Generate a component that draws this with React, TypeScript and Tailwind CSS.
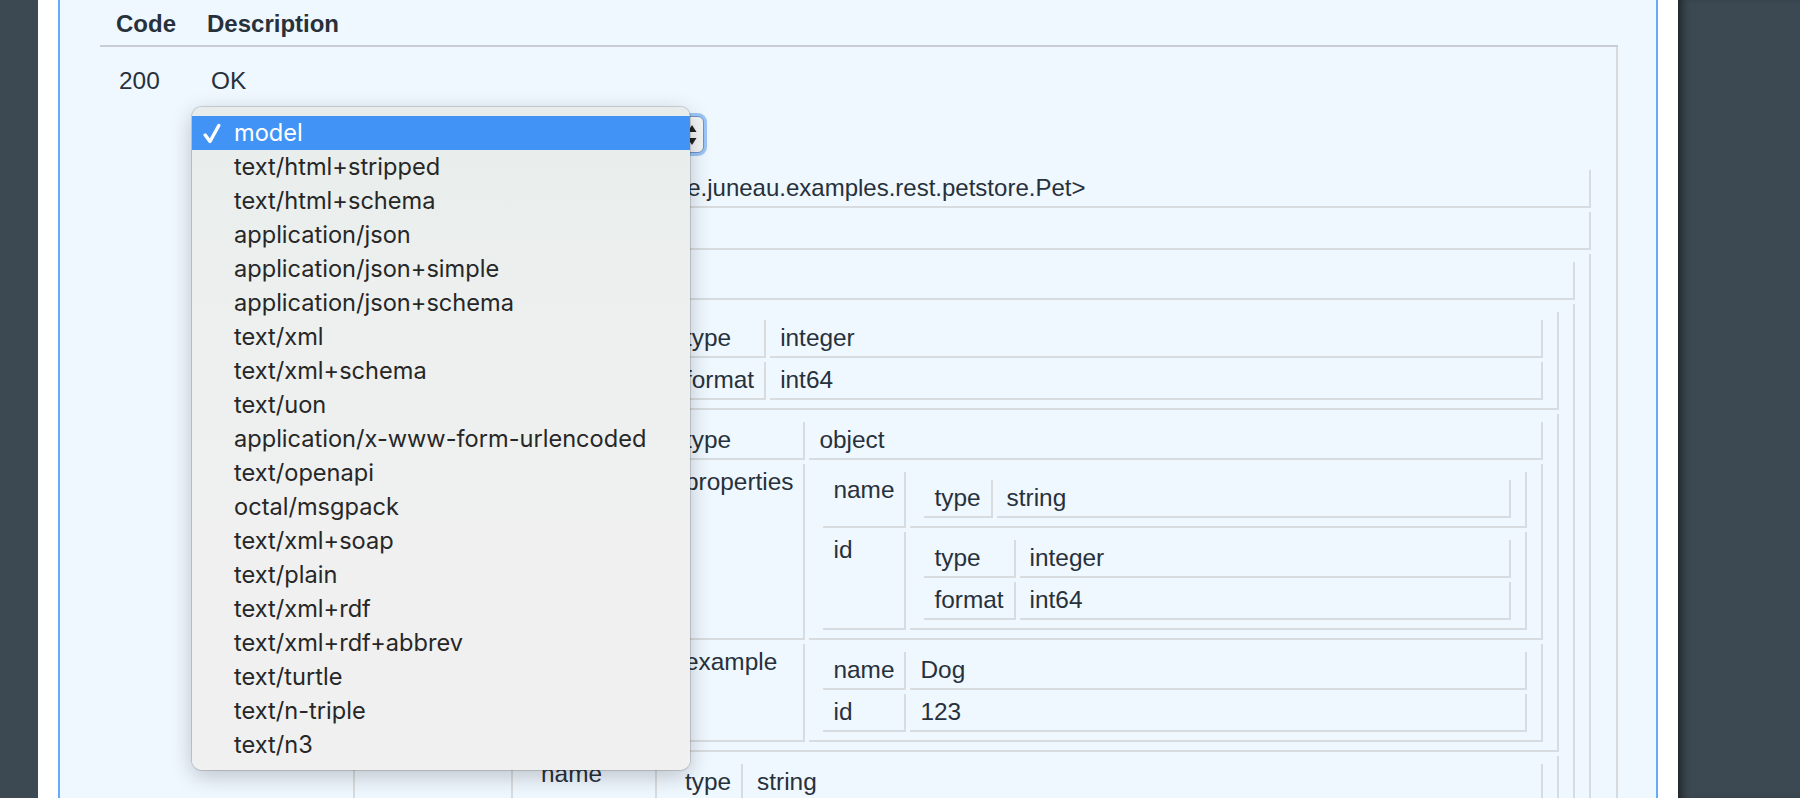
import React from "react";

type Row = { k: string; v: string | Table; pad?: boolean };
type Table = { rows: Row[]; cols?: string };

const cell = "border-r-2 border-b-2 border-[#d9dcdf] px-2.5 py-1";

function KV({ t }: { t: Table }) {
  return (
    <div className={`grid gap-1 p-1 ${t.cols ?? "grid-cols-[auto_minmax(0,1fr)]"}`}>
      {t.rows.map((r, i) => (
        <React.Fragment key={i}>
          <div className={`${cell} whitespace-nowrap`}>{r.k}</div>
          {typeof r.v === "string" ? (
            <div className={`${cell} whitespace-nowrap overflow-hidden`}>
              {r.pad ? <span className="pl-[4px] text-[24px]">{r.v}</span> : r.v}
            </div>
          ) : (
            <div className={`${cell} min-w-0`}>
              <KV t={r.v} />
            </div>
          )}
        </React.Fragment>
      ))}
    </div>
  );
}

const s = (k: string, v: string): Row => ({ k, v });
const n = (k: string, rows: Row[], cols?: string): Row => ({ k, v: { rows, cols } });

const petProps: Table = {
  cols: "grid-cols-[126px_minmax(0,1fr)]",
  rows: [
    n("id", [s("type", "integer"), s("format", "int64")]),
    n("category", [
      s("type", "object"),
      n("properties", [
        n("name", [s("type", "string")]),
        n("id", [s("type", "integer"), s("format", "int64")]),
      ]),
      n("example", [s("name", "Dog"), s("id", "123")]),
    ]),
    n("name", [s("type", "string")]),
    n("photoUrls", [s("type", "array")]),
    n("tags", [s("type", "array")]),
    n("status", [s("type", "string")]),
  ],
};

const schema: Table = {
  cols: "grid-cols-[140px_minmax(0,1fr)]",
  rows: [
    { k: "description", v: "java.util.Collection<org.apache.juneau.examples.rest.petstore.Pet>", pad: true },
    s("type", "array"),
    {
      k: "items",
      v: {
        cols: "grid-cols-[140px_minmax(0,1fr)]",
        rows: [s("type", "object"), { k: "properties", v: petProps }],
      },
    },
  ],
};

const options = [
  "model",
  "text/html+stripped",
  "text/html+schema",
  "application/json",
  "application/json+simple",
  "application/json+schema",
  "text/xml",
  "text/xml+schema",
  "text/uon",
  "application/x-www-form-urlencoded",
  "text/openapi",
  "octal/msgpack",
  "text/xml+soap",
  "text/plain",
  "text/xml+rdf",
  "text/xml+rdf+abbrev",
  "text/turtle",
  "text/n-triple",
  "text/n3",
];

export default function App() {
  return (
    <div className="relative flex w-[1800px] h-[798px] overflow-hidden bg-[#3c4952] font-['Liberation_Sans',Arial,sans-serif] text-[24.4px] leading-[28px] text-[#27313b]">
      <div className="w-[38px] shrink-0" />
      <div className="w-[1640px] shrink-0 bg-white px-[20px]">
        <div className="h-full border-x-2 border-[#64acfa] bg-[#eff7ff] pl-[40px]">
          <div className="w-[1518px]">
            <div className="grid grid-cols-[96px_minmax(0,1fr)] border-b-2 border-[#c9ced5] font-bold text-[24px]">
              <div className="pl-[16px] pt-[10px] pb-[7px]">Code</div>
              <div className="pl-[11px] pt-[10px] pb-[7px]">Description</div>
            </div>
            <div className="grid grid-cols-[96px_minmax(0,1fr)]">
              <div className="pl-[19px] pt-[20px]">200</div>
              <div className="border-r-2 border-[#d7dadd] pl-[15px] pr-[21px] pt-[20px] h-[760px]">
                <div>OK</div>
                <div className="mt-[21px] relative h-[37px] w-[493px] rounded-[6px] border border-[#6f94c4] bg-[#f3f5f7] shadow-[0_0_0_3px_rgba(110,170,245,0.65)]">
                  <span className="absolute left-[22px] top-[3px]">model</span>
                  <svg className="absolute right-[6px] top-[6px]" width="10" height="24" viewBox="0 0 10 24">
                    <path d="M5 2 L9.5 9 L0.5 9 Z" fill="#222" />
                    <path d="M5 22 L9.5 15 L0.5 15 Z" fill="#222" />
                  </svg>
                </div>
                <div className="mt-[13px]">
                  <KV t={schema} />
                </div>
              </div>
            </div>
          </div>
        </div>
      </div>
      <div className="flex-1 shadow-[inset_9px_0_8px_-5px_rgba(0,0,0,0.5)]" />

      {/* popup menu */}
      <div className="absolute left-[192px] top-[107px] w-[498px] h-[663px] rounded-[10px] pt-[9px] bg-[linear-gradient(180deg,#e8edec_0%,#edf0ef_35%,#f0f0f0_70%)] shadow-[0_6px_22px_rgba(0,0,0,0.22),0_0_0_1px_rgba(0,0,0,0.14)] font-['Inter',sans-serif] text-[23.6px] leading-[34px] text-[#272727]">
        {options.map((o, i) => (
          <div
            key={o}
            className={`relative h-[34px] pl-[42px] whitespace-nowrap ${i === 0 ? "bg-[#4193f6] text-white" : ""}`}
          >
            {i === 0 && (
              <svg className="absolute left-[11px] top-[7px]" width="18" height="21" viewBox="0 0 18 21">
                <path d="M2.2 12 L7 18.5 L15.8 2.5" fill="none" stroke="#fff" strokeWidth="3.4" strokeLinecap="round" strokeLinejoin="round" />
              </svg>
            )}
            {o}
          </div>
        ))}
      </div>
    </div>
  );
}
